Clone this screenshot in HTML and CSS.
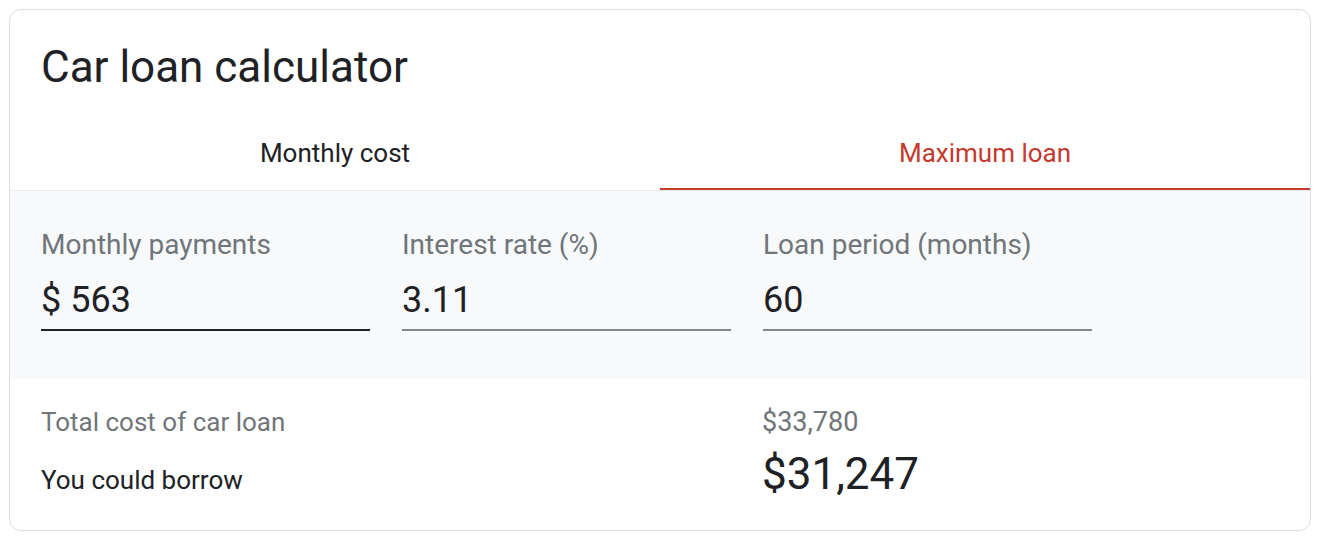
FILE: index.html
```html
<!DOCTYPE html>
<html lang="en">
<head>
    <meta charset="UTF-8">
    <meta name="viewport" content="width=device-width, initial-scale=1.0">
    <title>Car loan calculator</title>
    <link rel="stylesheet" href="styles.css">
</head>
<body>
    <div class="card">
        <h1 class="title">Car loan calculator</h1>

        <div class="tabs">
            <div class="tab">Monthly cost</div>
            <div class="tab active">Maximum loan</div>
        </div>

        <div class="inputs">
            <div class="field focused">
                <label>Monthly payments</label>
                <div class="value">$ 563</div>
            </div>
            <div class="field">
                <label>Interest rate (%)</label>
                <div class="value">3.11</div>
            </div>
            <div class="field">
                <label>Loan period (months)</label>
                <div class="value">60</div>
            </div>
        </div>

        <div class="results">
            <div class="result-label muted">Total cost of car loan</div>
            <div class="result-value muted">$33,780</div>
            <div class="result-label">You could borrow</div>
            <div class="result-value big">$31,247</div>
        </div>
    </div>
</body>
</html>
```

FILE: styles.css
```css
:root {
    --text-color: #202124;
    --muted-color: #70757a;
    --border-color: #dadce0;
    --accent-color: #c5392f;
    --panel-color: #f8f9fa;
}

* {
    margin: 0;
    padding: 0;
    box-sizing: border-box;
    font-family: Roboto, 'Liberation Sans', Arial, sans-serif;
}

body {
    background: #ffffff;
    color: var(--text-color);
    padding: 9px 11px 11px 9px;
}

.card {
    border: 1px solid var(--border-color);
    border-radius: 12px;
    overflow: hidden;
    height: 522px;
}

.title {
    font-size: 44px;
    font-weight: 400;
    line-height: 56px;
    padding: 29px 0 0 31px;
    height: 108px;
    color: var(--text-color);
}

.tabs {
    display: flex;
    border-bottom: 1px solid #e8eaed;
}

.tab {
    flex: 1;
    text-align: center;
    font-size: 26px;
    height: 72px;
    line-height: 70px;
    color: var(--text-color);
}

.tab.active {
    color: var(--accent-color);
    border-bottom: 2px solid var(--accent-color);
}

.inputs {
    background: var(--panel-color);
    display: grid;
    grid-template-columns: 329px 329px 329px;
    column-gap: 32px;
    padding: 37px 31px 0;
    height: 188px;
}

.field label {
    display: block;
    font-size: 28px;
    line-height: 34px;
    color: var(--muted-color);
}

.field .value {
    font-size: 36px;
    line-height: 40px;
    padding: 18px 0 9px;
    border-bottom: 2px solid #80868b;
    color: var(--text-color);
}

.field.focused .value {
    border-bottom-color: var(--text-color);
}

.results {
    display: grid;
    grid-template-columns: 721px 1fr;
    row-gap: 7px;
    padding: 26px 31px 0;
    align-items: baseline;
}

.result-label {
    font-size: 26px;
    line-height: 34px;
}

.result-value {
    font-size: 27px;
    line-height: 34px;
}

.muted {
    color: var(--muted-color);
}

.big {
    font-size: 44px;
    line-height: 56px;
}
```
